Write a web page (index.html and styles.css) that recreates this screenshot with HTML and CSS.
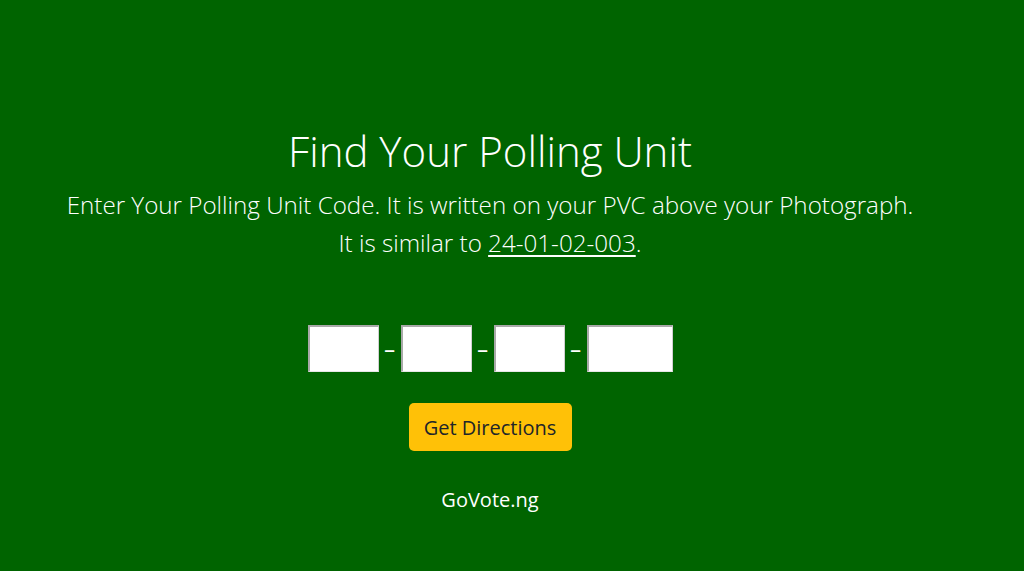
FILE: index.html
```html
<!DOCTYPE html>
<html lang="en">
<head>
<meta charset="utf-8">
<title>Find Your Polling Unit</title>
<link rel="stylesheet" href="styles.css">
</head>
<body>
<main class="page">
  <section class="content">
    <h1 class="title">Find Your Polling Unit</h1>
    <p class="lead">Enter Your Polling Unit Code. It is written on your PVC above your Photograph.<br>It is similar to <a class="sample" href="#">24-01-02-003</a>.</p>
    <form class="code-form">
      <div class="code-row">
        <input class="code-box box-a" type="text" aria-label="State">
        <span class="dash">-</span>
        <input class="code-box box-a" type="text" aria-label="LGA">
        <span class="dash">-</span>
        <input class="code-box box-a" type="text" aria-label="Ward">
        <span class="dash">-</span>
        <input class="code-box box-b" type="text" aria-label="Unit">
      </div>
      <button class="go-btn" type="button">Get Directions</button>
    </form>
    <p class="brand">GoVote.ng</p>
  </section>
</main>
</body>
</html>
```
FILE: styles.css
```css
html, body {
  margin: 0;
  padding: 0;
}
body {
  background: #006400;
  color: #fff;
  font-family: "Open Sans", "Noto Sans", sans-serif;
  height: 571px;
  overflow: hidden;
}
.page {
  display: flex;
  justify-content: center;
  padding-right: 44px;
}
.content {
  display: flex;
  flex-direction: column;
  align-items: center;
  padding-top: 121px;
}
.title {
  margin: 0;
  font-weight: 300;
  font-size: 42px;
  line-height: 60px;
}
.lead {
  margin: 5px 0 0;
  font-weight: 300;
  font-size: 24.2px;
  line-height: 38px;
  text-align: center;
}
.sample {
  color: #fff;
  text-decoration: underline;
  text-underline-offset: 3px;
}
.code-form {
  display: flex;
  flex-direction: column;
  align-items: center;
  margin-top: 63px;
}
.code-row {
  display: flex;
  align-items: center;
  gap: 0;
}
.code-box {
  box-sizing: border-box;
  height: 47px;
  margin: 0;
  padding: 0 4px;
  background: #fff;
  border-style: solid;
  border-width: 2px 1px 1px 2px;
  border-color: #a9a9a9 #d0d0d0 #e6e6e6 #a9a9a9;
  font-size: 20px;
}
.box-a { width: 71px; }
.box-b { width: 86px; }
.dash {
  width: 22px;
  text-align: center;
  font-size: 38px;
  font-weight: 300;
  color: #fff;
  line-height: 1;
  padding-bottom: 4px;
}
.go-btn {
  margin-top: 31px;
  width: 163px;
  height: 48px;
  border: none;
  border-radius: 5px;
  background: #ffc107;
  color: #212529;
  font-family: "Open Sans", "Noto Sans", sans-serif;
  font-size: 20px;
  font-weight: 400;
}
.brand {
  margin: 36px 0 0;
  font-size: 20px;
  line-height: 26px;
  font-weight: 400;
}
```
